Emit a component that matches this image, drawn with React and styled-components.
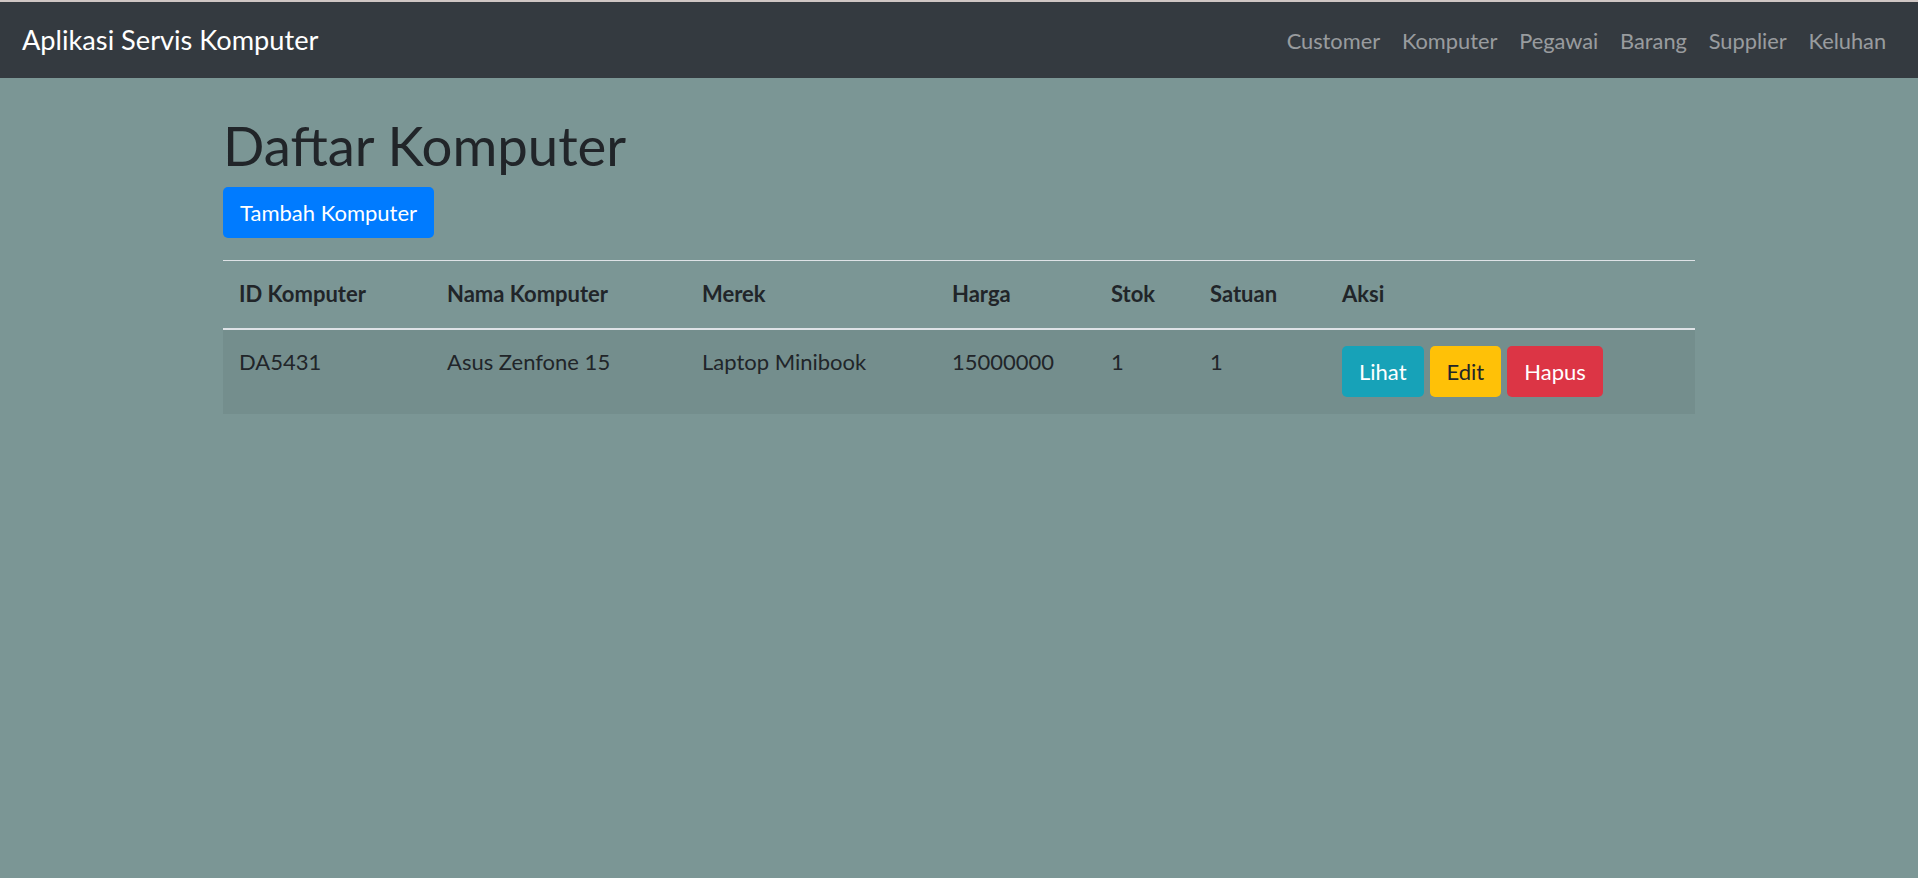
import React from 'react';
import styled, { createGlobalStyle } from 'styled-components';

const GlobalStyle = createGlobalStyle`
  html, body {
    margin: 0;
    padding: 0;
    background: #7b9695;
  }
  body {
    font-family: Lato, 'Open Sans', sans-serif;
    font-size: 22px;
    color: #212529;
    min-height: 878px;
  }
  * {
    box-sizing: border-box;
  }
`;

const Page = styled.div`
  min-height: 878px;
  border-top: 2px solid #cfc6c4;
`;

const NavBar = styled.nav`
  display: flex;
  align-items: center;
  justify-content: space-between;
  height: 76px;
  padding: 0 21px 0 22px;
  background: #343a40;
`;

const Brand = styled.a`
  color: #fff;
  font-size: 27.2px;
  text-decoration: none;
  margin-top: -2px;
`;

const NavLinks = styled.div`
  display: flex;
  align-items: center;
`;

const NavLink = styled.a`
  color: rgba(255, 255, 255, 0.5);
  font-size: 21.8px;
  padding: 0 10.9px;
  text-decoration: none;
`;

const Container = styled.main`
  width: 1472px;
  margin: 0 auto;
  padding-top: 35px;
`;

const Title = styled.h1`
  margin: 0 0 10px;
  font-size: 54.5px;
  font-weight: 400;
  line-height: 64px;
  color: #212529;
`;

const Button = styled.button`
  display: inline-block;
  height: 51px;
  padding: 0 17px;
  border: none;
  border-radius: 5px;
  font-family: inherit;
  font-size: 22px;
  line-height: 51px;
  color: ${(p) => p.$fg || '#fff'};
  background: ${(p) => p.$bg};
  cursor: pointer;
  vertical-align: top;
`;

const Table = styled.table`
  width: 1472px;
  margin-top: 22px;
  border-collapse: collapse;
  table-layout: fixed;
`;

const HeadCell = styled.th`
  width: ${(p) => p.$w}px;
  padding: 17px 16px 18px;
  border-top: 1px solid #dee2e6;
  border-bottom: 2px solid #dee2e6;
  text-align: left;
  font-weight: 700;
  line-height: 32px;
  vertical-align: bottom;
`;

const Row = styled.tr`
  background: rgba(0, 0, 0, 0.05);
`;

const Cell = styled.td`
  padding: 16px 16px 17px;
  line-height: 32px;
  vertical-align: top;
`;

const Actions = styled.div`
  display: flex;
  gap: 6px;
`;

const columns = [
  { label: 'ID Komputer', w: 208 },
  { label: 'Nama Komputer', w: 255 },
  { label: 'Merek', w: 250 },
  { label: 'Harga', w: 159 },
  { label: 'Stok', w: 99 },
  { label: 'Satuan', w: 132 },
  { label: 'Aksi', w: 369 },
];

const komputer = [
  {
    id: 'DA5431',
    nama: 'Asus Zenfone 15',
    merek: 'Laptop Minibook',
    harga: '15000000',
    stok: '1',
    satuan: '1',
  },
];

const menu = ['Customer', 'Komputer', 'Pegawai', 'Barang', 'Supplier', 'Keluhan'];

export default function App() {
  return (
    <Page>
      <GlobalStyle />
      <NavBar>
        <Brand href="#">Aplikasi Servis Komputer</Brand>
        <NavLinks>
          {menu.map((m) => (
            <NavLink key={m} href="#">
              {m}
            </NavLink>
          ))}
        </NavLinks>
      </NavBar>
      <Container>
        <Title>Daftar Komputer</Title>
        <Button $bg="#007bff">Tambah Komputer</Button>
        <Table>
          <thead>
            <tr>
              {columns.map((c) => (
                <HeadCell key={c.label} $w={c.w}>
                  {c.label}
                </HeadCell>
              ))}
            </tr>
          </thead>
          <tbody>
            {komputer.map((k) => (
              <Row key={k.id}>
                <Cell>{k.id}</Cell>
                <Cell>{k.nama}</Cell>
                <Cell>{k.merek}</Cell>
                <Cell>{k.harga}</Cell>
                <Cell>{k.stok}</Cell>
                <Cell>{k.satuan}</Cell>
                <Cell>
                  <Actions>
                    <Button $bg="#17a2b8">Lihat</Button>
                    <Button $bg="#ffc107" $fg="#212529">
                      Edit
                    </Button>
                    <Button $bg="#dc3545">Hapus</Button>
                  </Actions>
                </Cell>
              </Row>
            ))}
          </tbody>
        </Table>
      </Container>
    </Page>
  );
}
